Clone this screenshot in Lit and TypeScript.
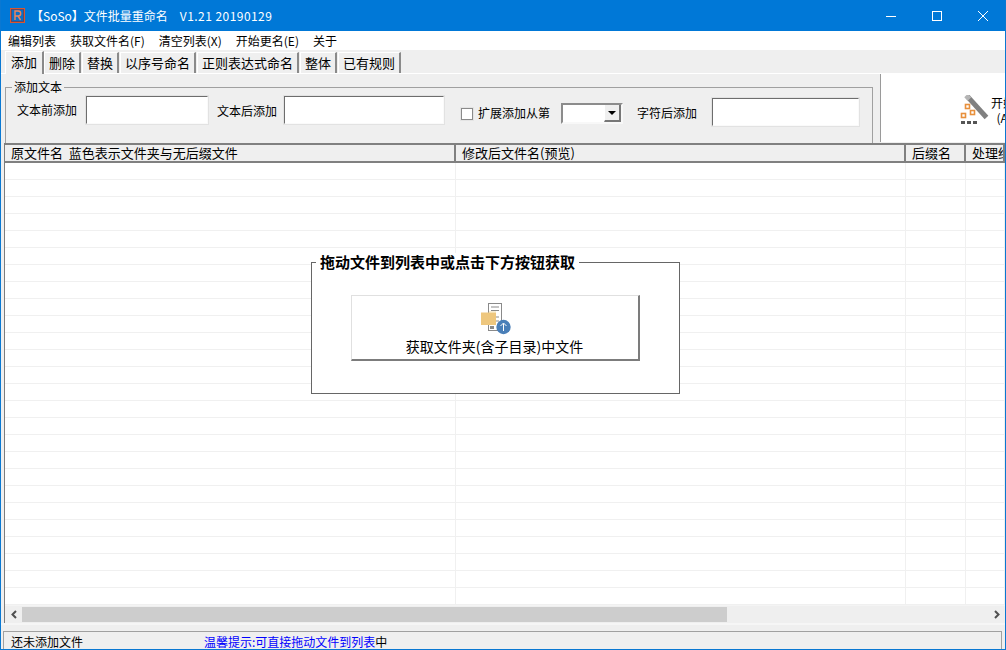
import { LitElement, html, css } from "lit";
import { customElement } from "lit/decorators.js";

const TABS = ["添加", "删除", "替换", "以序号命名", "正则表达式命名", "整体", "已有规则"];
const MENUS = ["编辑列表", "获取文件名(F)", "清空列表(X)", "开始更名(E)", "关于"];
const ROWS = Array.from({ length: 26 });

@customElement("app-root")
export class AppRoot extends LitElement {
  static styles = css`
    :host {
      display: flex;
      flex-direction: column;
      box-sizing: border-box;
      width: 1006px;
      height: 650px;
      overflow: hidden;
      background: #efefef;
      border: 1px solid #0a78d2;
      border-top: 0;
      font-family: "Noto Sans CJK SC", "Noto Sans", sans-serif;
      font-size: 12px;
      color: #000;
    }
    .title {
      flex: none;
      height: 31px;
      background: #0078d7;
      margin: 0 -1px;
      color: #fff;
      display: flex;
      align-items: center;
    }
    .app-icon { margin-left: 10px; width: 15px; height: 15px; flex: none; }
    .title-text { margin-left: 6px; white-space: pre; font-size: 12px; line-height: 16px; }
    .version { margin-left: 12px; letter-spacing: 0.45px; white-space: pre; line-height: 16px; }
    .controls { margin-left: auto; display: flex; }
    .ctl { width: 46px; height: 31px; display: flex; align-items: center; justify-content: center; }
    .menu {
      flex: none;
      height: 19px;
      background: #fff;
      display: flex;
      align-items: center;
      padding-left: 7px;
      gap: 14px;
      line-height: 19px;
    }
    .tabs {
      flex: none;
      height: 24px;
      display: flex;
      align-items: flex-end;
      padding-left: 4px;
      box-sizing: border-box;
      border-bottom: 1px solid #fff;
    }
    .tab {
      box-sizing: border-box;
      height: 21px;
      padding: 0 4px;
      margin-right: 1px;
      font-size: 13px;
      line-height: 20px;
      border-top: 1px solid #fff;
      border-left: 1px solid #fff;
      border-right: 2px solid #8a8a8a;
      white-space: nowrap;
    }
    .tab.active {
      height: 23px;
      margin-bottom: -1px;
      margin-right: 0;
      padding: 0 5px;
      position: relative;
      background: #efefef;
      line-height: 19px;
    }
    .toolbar { flex: none; height: 69px; display: flex; }
    fieldset {
      box-sizing: border-box;
      flex: none;
      margin: 5px 0 0 4px;
      padding: 0;
      width: 868px;
      height: 64px;
      border: 1px solid #a0a0a0;
      border-bottom: 0;
      min-width: 0;
    }
    legend { margin-left: 6px; padding: 0 2px; font-size: 12px; line-height: 16px; }
    .fields { display: flex; align-items: flex-start; padding-left: 11px; }
    .lbl { white-space: nowrap; line-height: 16px; }
    .l1 { margin-top: 7px; }
    .l2 { margin: 8px 0 0 8px; }
    .l3 { margin: 10px 0 0 5px; }
    .l4 { margin: 10px 0 0 14px; }
    .input {
      box-sizing: border-box;
      background: #fff;
      height: 30px;
      border: 2px solid #ececec;
      border-top-color: #6d6d6d;
      border-left-color: #6d6d6d;
      border-right-color: #fafafa;
      border-bottom-color: #fafafa;
      outline: 1px solid #e2e2e2;
      outline-offset: -1px;
    }
    .i1 { width: 124px; margin-left: 8px; }
    .i2 { width: 162px; margin-left: 6px; }
    .i3 { width: 149px; margin: 2px 0 0 14px; }
    .check {
      box-sizing: border-box;
      width: 12px;
      height: 12px;
      margin: 13px 0 0 16px;
      background: #fff;
      border: 1px solid #8a8a8a;
      outline: 1px solid #e4e4e4;
    }
    .combo {
      box-sizing: border-box;
      width: 62px;
      height: 21px;
      margin: 8px 0 0 11px;
      background: #fff;
      display: flex;
      justify-content: flex-end;
      border: 2px solid #8c8c8c;
      border-right-color: #f8f8f8;
      border-bottom-color: #f8f8f8;
    }
    .combo-btn {
      box-sizing: border-box;
      width: 17px;
      background: #efefef;
      border-right: 2px solid #777;
      border-bottom: 2px solid #777;
      border-left: 1px solid #fff;
      display: flex;
      align-items: center;
      justify-content: center;
    }
    .arrow { width: 0; height: 0; border: 4px solid transparent; border-top: 4px solid #000; border-bottom: 0; }
    .start {
      flex: 1;
      min-width: 0;
      margin-left: 7px;
      box-sizing: border-box;
      height: 68px;
      background: #fff;
      border-left: 1px solid #9a9a9a;
      display: flex;
      align-items: center;
      padding-left: 79px;
      overflow: hidden;
    }
    .start-icon { width: 30px; height: 32px; flex: none; margin: 6px 1px 0 0; }
    .start-text {
      flex: none;
      display: flex;
      flex-direction: column;
      align-items: center;
      line-height: 15px;
      white-space: nowrap;
      margin-top: 3px;
    }
    .start-text small { font-size: 12px; }
    .list {
      flex: 1;
      min-height: 0;
      margin-left: 3px;
      border-left: 1px solid #7d7d7d;
      border-top: 2px solid #808080;
      position: relative;
      background: #fff;
      display: flex;
      flex-direction: column;
      overflow: hidden;
    }
    .head, .row { display: grid; grid-template-columns: 451px 450px 60px 1fr; flex: none; }
    .head {
      height: 18px;
      box-sizing: border-box;
      background: #efefef;
      border-bottom: 2px solid #808080;
      font-size: 13px;
      line-height: 16px;
    }
    .head div {
      padding-left: 6px;
      border-right: 2px solid #808080;
      white-space: nowrap;
      overflow: hidden;
      box-sizing: border-box;
    }
    .rows { flex: 1; min-height: 0; overflow: hidden; }
    .row { height: 17px; box-sizing: border-box; border-bottom: 1px solid #f0f0f0; }
    .row div { border-right: 1px solid #f0f0f0; }
    .scroll {
      flex: none;
      box-sizing: border-box;
      height: 18px;
      background: #efefef;
      border-top: 1px solid #f4f4f4;
      display: flex;
      align-items: center;
      justify-content: space-between;
    }
    .sb-arrow { width: 17px; display: flex; justify-content: center; flex: none; }
    .track { flex: 1; align-self: stretch; display: flex; padding: 1px 0; }
    .thumb { width: 705px; background: #cdcdcd; }
    .gap { flex: none; box-sizing: border-box; height: 8px; border-top: 2px solid #f6f6f6; }
    .status {
      flex: none;
      height: 18px;
      box-sizing: border-box;
      margin: 0 3px 0 2px;
      border: 1px solid #a0a0a0;
      border-bottom: 0;
      display: flex;
      line-height: 20px;
      padding-left: 7px;
      white-space: nowrap;
      overflow: hidden;
    }
    .tip { margin-left: 121px; color: #0000ff; }
    .tip span { color: #000; }
    .drop {
      position: absolute;
      left: 306px;
      top: 117px;
      width: 369px;
      height: 132px;
      box-sizing: border-box;
      border: 1px solid #666;
      background: #fff;
      display: flex;
      justify-content: center;
    }
    .drop-title {
      position: absolute;
      left: 4px;
      top: -10px;
      padding: 0 4px;
      background: #fff;
      font-size: 15px;
      font-weight: 700;
      line-height: 18px;
      white-space: nowrap;
    }
    .drop-btn {
      box-sizing: border-box;
      width: 289px;
      height: 66px;
      margin-top: 32px;
      margin-left: -1px;
      border: 1px solid #e0e0e0;
      border-right: 2px solid #7c7c7c;
      border-bottom: 2px solid #7c7c7c;
      display: flex;
      flex-direction: column;
      align-items: center;
      font-size: 14px;
      padding-top: 6px;
    }
    .drop-icon { width: 34px; height: 32px; flex: none; margin: 1px 0 0 4px; }
    .drop-label { line-height: 18px; margin-top: 2px; }
  `;

  render() {
    return html`
      <div class="title">
        <svg class="app-icon" viewBox="0 0 15 15">
          <rect x="0.5" y="0.5" width="14" height="14" fill="#0a70c8" stroke="#d9562f" />
          <rect x="1.5" y="1.5" width="12" height="12" fill="none" stroke="#5b4a6a" stroke-width="1" />
          <path d="M5 12V3h3.2a2.3 2.3 0 0 1 0 5H5M8 8l2.6 4" fill="none" stroke="#f2845a" stroke-width="1.4" />
        </svg>
        <span class="title-text">【SoSo】文件批量重命名</span>
        <span class="version">V1.21 20190129</span>
        <div class="controls">
          <div class="ctl">
            <svg width="10" height="10" viewBox="0 0 10 10"><path d="M0 5.5h10" stroke="#fff" /></svg>
          </div>
          <div class="ctl">
            <svg width="10" height="10" viewBox="0 0 10 10"><rect x="0.5" y="0.5" width="9" height="9" fill="none" stroke="#fff" /></svg>
          </div>
          <div class="ctl">
            <svg width="10" height="10" viewBox="0 0 10 10"><path d="M0 0l10 10M10 0L0 10" stroke="#fff" /></svg>
          </div>
        </div>
      </div>
      <div class="menu">${MENUS.map((m) => html`<span>${m}</span>`)}</div>
      <div class="tabs">
        ${TABS.map((t, i) => html`<div class="tab ${i === 0 ? "active" : ""}">${t}</div>`)}
      </div>
      <div class="toolbar">
        <fieldset>
          <legend>添加文本</legend>
          <div class="fields">
            <span class="lbl l1">文本前添加</span>
            <div class="input i1"></div>
            <span class="lbl l2">文本后添加</span>
            <div class="input i2"></div>
            <div class="check"></div>
            <span class="lbl l3">扩展添加从第</span>
            <div class="combo"><div class="combo-btn"><div class="arrow"></div></div></div>
            <span class="lbl l4">字符后添加</span>
            <div class="input i3"></div>
          </div>
        </fieldset>
        <div class="start">
          <svg class="start-icon" viewBox="0 0 30 32">
            <path d="M7.500 1.500L26.500 22.500" stroke="#808080" stroke-width="5" fill="none" />
            <path d="M6 0.500l3.500 3.500" stroke="#b5b5b5" stroke-width="5" fill="none" />
            <rect x="5.500" y="9.500" width="4" height="4" fill="#fff" stroke="#e8903c" stroke-width="1.600" />
            <rect x="10.500" y="15.500" width="4" height="4" fill="#fff" stroke="#e8903c" stroke-width="1.600" />
            <rect x="1.500" y="18.500" width="4" height="4" fill="#fff" stroke="#e8903c" stroke-width="1.600" />
            <rect x="1" y="26" width="4" height="3" fill="#555" />
            <rect x="7" y="26" width="4" height="3" fill="#555" />
            <rect x="13" y="26" width="4" height="3" fill="#555" />
          </svg>
          <div class="start-text"><span>开始更名</span><small>(Alt+E)</small></div>
        </div>
      </div>
      <div class="list">
        <div class="head">
          <div>原文件名&nbsp; 蓝色表示文件夹与无后缀文件</div>
          <div>修改后文件名(预览)</div>
          <div>后缀名</div>
          <div>处理结果</div>
        </div>
        <div class="rows">
          ${ROWS.map(() => html`<div class="row"><div></div><div></div><div></div><div></div></div>`)}
        </div>
        <div class="scroll">
          <div class="sb-arrow">
            <svg width="8" height="9" viewBox="0 0 8 9"><path d="M6 1L2.500 4.500 6 8" fill="none" stroke="#505050" stroke-width="2" /></svg>
          </div>
          <div class="track"><div class="thumb"></div></div>
          <div class="sb-arrow">
            <svg width="8" height="9" viewBox="0 0 8 9"><path d="M2 1l3.500 3.500L2 8" fill="none" stroke="#505050" stroke-width="2" /></svg>
          </div>
        </div>
        <div class="drop">
          <span class="drop-title">拖动文件到列表中或点击下方按钮获取</span>
          <div class="drop-btn">
            <svg class="drop-icon" viewBox="0 0 34 32">
              <rect x="8.500" y="0.500" width="13" height="27" fill="#fff" stroke="#8a8a8a" />
              <path d="M11 4h8M11 7.500h8M11 14h8M11 18h8" stroke="#8a8a8a" />
              <rect x="10" y="23" width="4" height="3" fill="#8a8a8a" />
              <path d="M1 9.500h15v12.500H1z" fill="#eec77e" />
              <path d="M9 8.500h7v1H9z" fill="#f3dca8" />
              <circle cx="23.500" cy="24" r="7.200" fill="#4a7fb8" />
              <path d="M23.500 28v-7.500M20.500 23l3-3 3 3" fill="none" stroke="#fff" />
            </svg>
            <span class="drop-label">获取文件夹(含子目录)中文件</span>
          </div>
        </div>
      </div>
      <div class="gap"></div>
      <div class="status">
        <span>还未添加文件</span>
        <span class="tip">温馨提示:可直接拖动文件到列表<span>中</span></span>
      </div>
    `;
  }
}
